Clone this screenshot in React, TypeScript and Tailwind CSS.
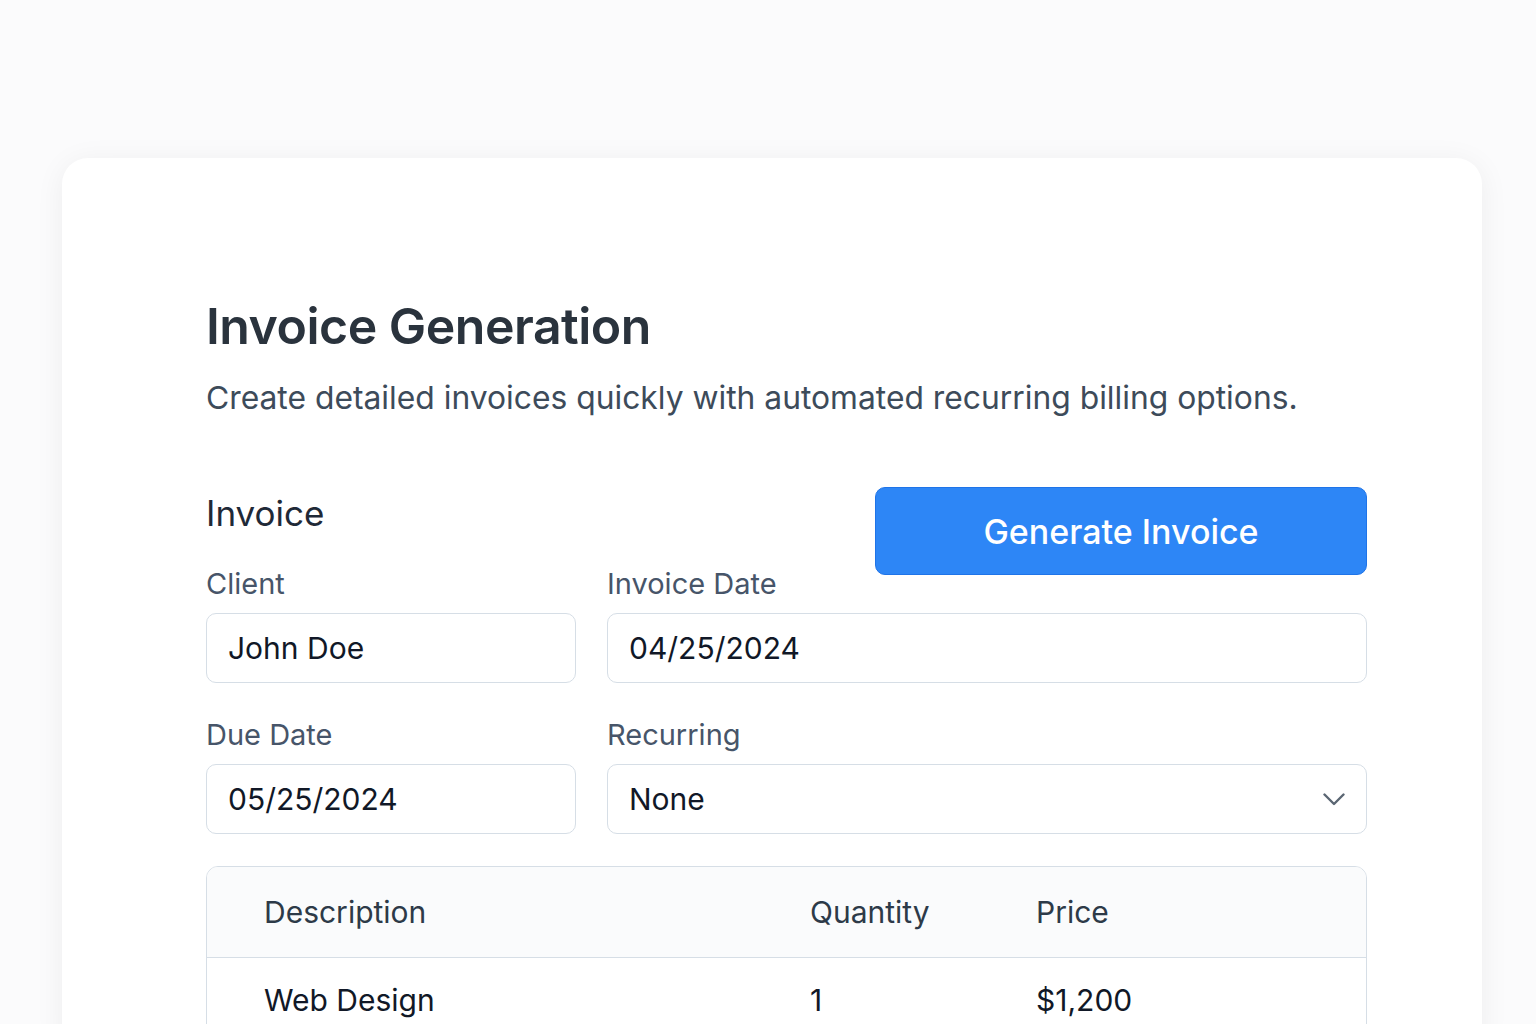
import React from "react";

const Field = ({
  label,
  value,
  className,
  select,
}: {
  label: string;
  value: string;
  className?: string;
  select?: boolean;
}) => {
  return (
    <div className={className}>
      <label className="block text-[29px] leading-[34px] text-[#475569]">{label}</label>
      <div className="mt-[12px] flex h-[70px] items-center justify-between rounded-[10px] border border-[#d6dee6] bg-white pl-[21px] pr-[21px]">
        <span className="text-[30px] text-[#111827]">{value}</span>
        {select && (
          <svg width="22" height="13" viewBox="0 0 22 13" fill="none" className="text-[#5b6673]">
            <path d="M1.5 1.5 L11 11 L20.5 1.5" stroke="currentColor" strokeWidth="2.4" strokeLinecap="round" strokeLinejoin="round" />
          </svg>
        )}
      </div>
    </div>
  );
};

export default function App() {
  return (
    <div
      className="min-h-screen bg-[#fbfbfc] pl-[62px] pr-[54px] pt-[158px]"
      style={{ fontFamily: "Inter, 'Noto Sans', sans-serif" }}
    >
      <div className="h-[900px] rounded-[26px] bg-white pl-[144px] pr-[115px] pt-[140px] shadow-[0_4px_30px_rgba(15,23,42,0.06)]">
        <h1 className="text-[50px] font-semibold leading-[56px] tracking-[-0.5px] text-[#2a333d]">
          Invoice Generation
        </h1>
        <p className="mt-[24px] text-[31.8px] leading-[40px] text-[#3d4b5a]">
          Create detailed invoices quickly with automated recurring billing options.
        </p>

        <div className="mt-[69px] flex items-start justify-between">
          <h2 className="pt-[6px] text-[35px] leading-[40px] text-[#1f2937]">Invoice</h2>
          <button className="h-[88px] w-[492px] rounded-[10px] border border-[#1f74e8] bg-[#2d86f6] text-[34px] font-medium text-white">
            Generate Invoice
          </button>
        </div>

        <div className="-mt-[8px] grid grid-cols-[370px_1fr] gap-x-[31px] gap-y-[35px]">
          <Field label="Client" value="John Doe" />
          <Field label="Invoice Date" value="04/25/2024" />
          <Field label="Due Date" value="05/25/2024" />
          <Field label="Recurring" value="None" select />
        </div>

        <div className="mt-[32px] overflow-hidden rounded-t-[12px] border border-[#d6dee6]">
          <div className="grid h-[91px] grid-cols-[546px_226px_1fr] items-center border-b border-[#d6dee6] bg-[#fafbfc] pl-[57px] text-[30px] text-[#2d3a48]">
            <span>Description</span>
            <span>Quantity</span>
            <span>Price</span>
          </div>
          <div className="grid h-[84px] grid-cols-[546px_226px_1fr] items-center pl-[57px] text-[30px] text-[#111827]">
            <span>Web Design</span>
            <span>1</span>
            <span>$1,200</span>
          </div>
        </div>
      </div>
    </div>
  );
}
